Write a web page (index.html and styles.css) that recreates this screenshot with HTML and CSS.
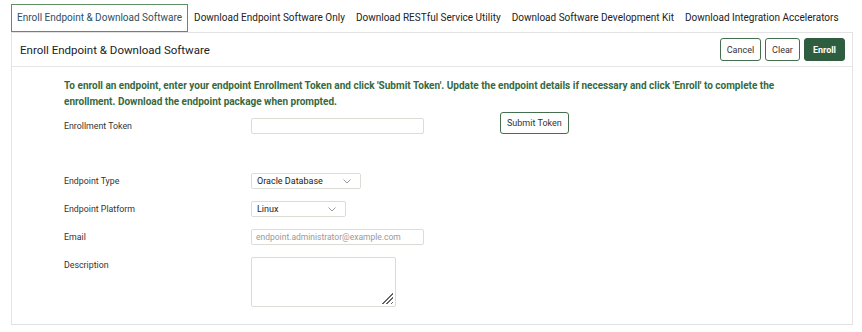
FILE: index.html
```html
<!DOCTYPE html>
<html lang="en">
<head>
<meta charset="utf-8">
<title>Enroll Endpoint</title>
<link rel="stylesheet" href="styles.css">
</head>
<body>
<div class="page">
  <nav class="tabs">
    <span class="tab active">Enroll Endpoint &amp; Download Software</span>
    <span class="tab">Download Endpoint Software Only</span>
    <span class="tab">Download RESTful Service Utility</span>
    <span class="tab">Download Software Development Kit</span>
    <span class="tab">Download Integration Accelerators</span>
  </nav>
  <section class="panel">
    <header class="panel-head">
      <h1 class="panel-title">Enroll Endpoint &amp; Download Software</h1>
      <div class="actions">
        <button class="btn">Cancel</button>
        <button class="btn">Clear</button>
        <button class="btn btn-primary">Enroll</button>
      </div>
    </header>
    <div class="panel-body">
      <p class="intro">To enroll an endpoint, enter your endpoint Enrollment Token and click 'Submit Token'. Update the endpoint details if necessary and click 'Enroll' to complete the enrollment. Download the endpoint package when prompted.</p>
      <div class="row row-token">
        <label class="label">Enrollment Token</label>
        <div class="field-col"><input class="input input-wide" type="text"></div>
        <button class="btn btn-submit">Submit Token</button>
      </div>
      <div class="row row-first">
        <label class="label">Endpoint Type</label>
        <div class="select select-type"><span>Oracle Database</span><svg class="chev" width="8" height="5" viewBox="0 0 8 5"><path d="M0.5 0.5 L4 4 L7.5 0.5" fill="none" stroke="#9a9a9a" stroke-width="1"/></svg></div>
      </div>
      <div class="row">
        <label class="label">Endpoint Platform</label>
        <div class="select select-platform"><span>Linux</span><svg class="chev" width="8" height="5" viewBox="0 0 8 5"><path d="M0.5 0.5 L4 4 L7.5 0.5" fill="none" stroke="#9a9a9a" stroke-width="1"/></svg></div>
      </div>
      <div class="row">
        <label class="label">Email</label>
        <input class="input input-wide" type="text" placeholder="endpoint.administrator@example.com">
      </div>
      <div class="row row-top">
        <label class="label">Description</label>
        <textarea class="textarea"></textarea>
      </div>
    </div>
  </section>
</div>
</body>
</html>
```

FILE: styles.css
```css
* { box-sizing: border-box; }
html, body { margin: 0; padding: 0; background: #fff; }
body { font-family: "Roboto", "Liberation Sans", sans-serif; color: #333; }

.page { padding: 4px 10px 0 11px; }

.tabs { display: flex; align-items: stretch; height: 28px; }
.tab {
  border: 1px solid transparent;
  padding: 0 4px 0 5px;
  line-height: 25px;
  font-size: 10px;
  color: #222;
  white-space: nowrap;
}
.tab.active { border-color: #5f9064; color: #2f4f5f; padding: 0 5px 0 5px; }

.panel {
  border: 1px solid #e3e3e3;
  width: 842px;
  height: 293px;
}
.panel-head {
  display: flex;
  align-items: center;
  justify-content: space-between;
  height: 34px;
  padding: 0 7px 0 8px;
  border-bottom: 1px solid #e6e6e6;
}
.panel-title { margin: 0; font-size: 11.5px; font-weight: 400; color: #222; }
.actions { display: flex; gap: 4px; }

.btn {
  font-family: inherit;
  height: 23px;
  padding: 0 6px;
  font-size: 9px;
  color: #333;
  background: #fff;
  border: 1px solid #44704f;
  border-radius: 3px;
}
.btn-primary { background: #2e5e3f; border-color: #2e5e3f; color: #fff; font-weight: 700; padding: 0 8px; }

.panel-body { padding: 11px 0 0 52px; }
.intro {
  margin: 0;
  width: 730px;
  font-size: 10px;
  line-height: 16px;
  font-weight: 700;
  color: #356a40;
}

.row { display: flex; align-items: center; margin-top: 12px; }
.row-token { align-items: flex-end; margin-top: 2px; }
.row-first { margin-top: 39px; }
.row-top { align-items: flex-start; }

.label { width: 187px; flex: none; font-size: 8.8px; line-height: 16px; color: #333; }
.row-token .label { line-height: 15px; }
.field-col { width: 249px; flex: none; }

.input {
  font-family: inherit;
  height: 16px;
  border: 1px solid #dcdcd6;
  border-radius: 2px;
  padding: 0 4px;
  font-size: 8.5px;
  color: #333;
}
.input::placeholder { color: #9a9a9a; }
.input-wide { width: 173px; }

.btn-submit { height: 22px; padding: 0 6px; }

.select {
  display: flex;
  align-items: center;
  justify-content: space-between;
  height: 16px;
  border: 1px solid #dcdcd6;
  border-radius: 2px;
  padding: 0 9px 0 5px;
  font-size: 9px;
  color: #222;
}
.select-type { width: 110px; }
.select-platform { width: 95px; }
.chev { display: block; }

.textarea {
  width: 145px;
  height: 50px;
  border: 1px solid #dcdcd6;
  border-radius: 2px;
  resize: none;
  background:
    linear-gradient(135deg, #fff 50%, transparent 50%) right 2px bottom 2px / 13px 13px no-repeat,
    repeating-linear-gradient(135deg, transparent 0 1.8px, #666 1.8px 2.9px) right 2px bottom 2px / 13px 13px no-repeat,
    #fff;
}
```
